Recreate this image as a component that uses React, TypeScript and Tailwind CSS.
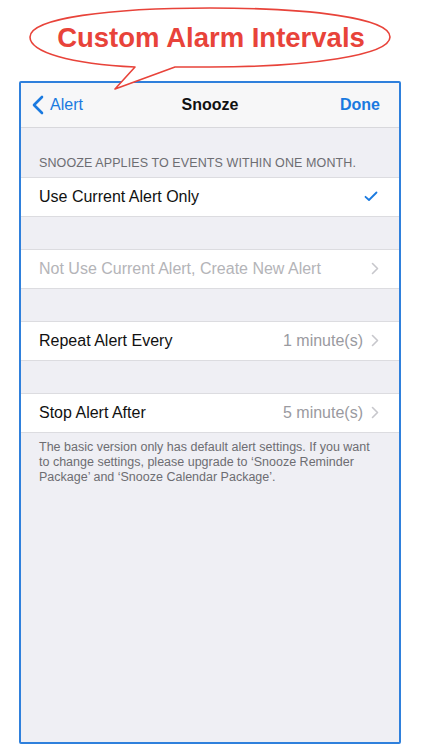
import React from 'react';

const Chevron = () => (
  <svg width="8" height="13" viewBox="0 0 8 13" className="ml-2">
    <path d="M1.5 1.5 L6.5 6.5 L1.5 11.5" fill="none" stroke="#c7c7cc" strokeWidth="1.6" strokeLinecap="round" strokeLinejoin="round" />
  </svg>
);

const Row: React.FC<{ label: string; value?: string; dim?: boolean; check?: boolean; chevron?: boolean }> = ({ label, value, dim, check, chevron }) => (
  <div className="h-[40px] bg-white border-y border-[#dcdce0] flex items-center pl-[18px] pr-[20px]">
    <span className={`flex-1 text-[16px] ${dim ? 'text-[#b4b4b8]' : 'text-[#111]'}`}>{label}</span>
    {value && <span className="text-[16px] text-[#9a9aa0]">{value}</span>}
    {check && (
      <svg width="14" height="11" viewBox="0 0 14 11" className="mr-[1px]">
        <path d="M1.5 5.8 L5 9 L12.5 1.5" fill="none" stroke="#1a7ae0" strokeWidth="1.8" strokeLinecap="round" strokeLinejoin="round" />
      </svg>
    )}
    {chevron && <Chevron />}
  </div>
);

export default function App() {
  return (
    <div className="relative w-[422px] h-[750px] bg-white overflow-hidden" style={{ fontFamily: '"Liberation Sans", Arial, sans-serif' }}>
      <div className="h-[81px]" />
      <div className="ml-[19px] w-[382px] h-[663px] border-2 border-[#2f80dc] rounded-[2px] bg-[#efeff4] flex flex-col">
        <div className="h-[45px] bg-[#f7f7f8] border-b border-[#d8d8dc] flex items-center px-[11px] relative">
          <svg width="12" height="20" viewBox="0 0 12 20">
            <path d="M10 2 L2 10 L10 18" fill="none" stroke="#1a7ae0" strokeWidth="2.6" strokeLinecap="round" strokeLinejoin="round" />
          </svg>
          <span className="ml-[6px] text-[16px] text-[#1a7ae0]">Alert</span>
          <span className="absolute left-0 right-0 text-center text-[16px] font-bold text-[#111] pointer-events-none">Snooze</span>
          <span className="ml-auto mr-[8px] text-[16px] font-bold text-[#1a7ae0]">Done</span>
        </div>
        <div className="pt-[26px] pb-[4px] pl-[18px] text-[12.5px] text-[#6d6d72] tracking-[0.1px]">SNOOZE APPLIES TO EVENTS WITHIN ONE MONTH.</div>
        <Row label="Use Current Alert Only" check />
        <div className="h-[32px]" />
        <Row label="Not Use Current Alert, Create New Alert" dim chevron />
        <div className="h-[32px]" />
        <Row label="Repeat Alert Every" value="1 minute(s)" chevron />
        <div className="h-[32px]" />
        <Row label="Stop Alert After" value="5 minute(s)" chevron />
        <div className="pt-[7px] pl-[18px] pr-[20px] text-[12.5px] leading-[15px] text-[#6d6d72]">
          The basic version only has default alert settings. If you want to change settings, please upgrade to ‘Snooze Reminder Package’ and ‘Snooze Calendar Package’.
        </div>
      </div>

      <svg className="absolute left-0 top-0" width="422" height="95" viewBox="0 0 422 95">
        <path
          d="M135 67 C 70 64, 30 52, 30 37 C 30 18, 110 8, 210 8 C 310 8, 390 18, 390 37 C 390 55, 310 67, 210 67 C 195 67, 183 67, 175 67 L 115 89 Z"
          fill="white"
          stroke="#e8433a"
          strokeWidth="1.6"
          strokeLinejoin="round"
        />
      </svg>
      <div className="absolute left-0 top-[21px] w-[422px] text-center text-[27.5px] leading-[34px] font-bold text-[#e8433a]" style={{ fontFamily: '"Liberation Sans", Arial, sans-serif' }}>
        Custom Alarm Intervals
      </div>
    </div>
  );
}
